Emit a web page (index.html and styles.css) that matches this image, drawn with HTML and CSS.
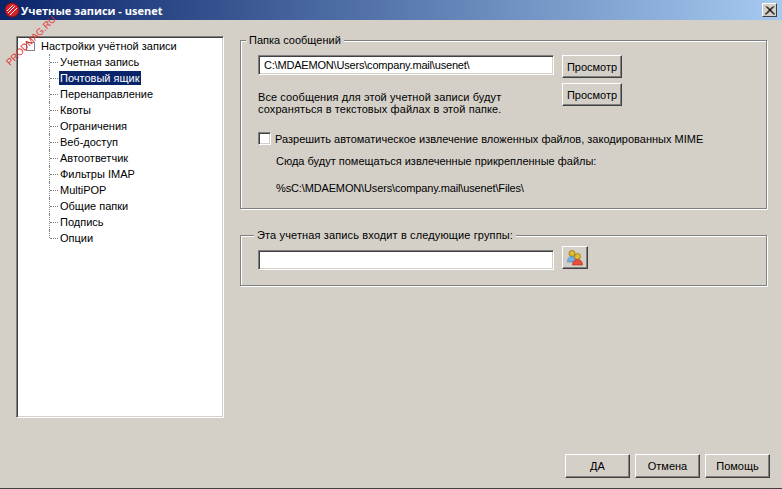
FILE: index.html
```html
<!DOCTYPE html>
<html lang="ru">
<head>
<meta charset="utf-8">
<title>Учетные записи - usenet</title>
<link rel="stylesheet" href="styles.css">
</head>
<body>
<div class="window">
  <header class="titlebar">
    <svg class="app-icon" width="16" height="16" viewBox="0 0 16 16">
      <circle cx="8" cy="8" r="7" fill="#d8202a" stroke="#7a1015" stroke-width="1"/>
      <path d="M3 9 9 3M4 11l7-7M6 13l7-7" stroke="#fff" stroke-width="1" fill="none"/>
    </svg>
    <span class="title-text">Учетные записи - usenet</span>
    <span class="close-btn">
      <svg width="10" height="9" viewBox="0 0 10 9"><path d="M1 0.5 9 8.5M2 0.5l8 8M9 0.5 1 8.5M8 0.5l-8 8" stroke="#000" stroke-width="1" fill="none"/></svg>
    </span>
  </header>
  <div class="content">
    <nav class="tree">
      <div class="tree-root"><span class="expander"></span><span>Настройки учётной записи</span></div>
      <ul class="tree-list">
        <li class="tree-item"><span class="tree-label">Учетная запись</span></li>
        <li class="tree-item"><span class="tree-label selected">Почтовый ящик</span></li>
        <li class="tree-item"><span class="tree-label">Перенаправление</span></li>
        <li class="tree-item"><span class="tree-label">Квоты</span></li>
        <li class="tree-item"><span class="tree-label">Ограничения</span></li>
        <li class="tree-item"><span class="tree-label">Веб-доступ</span></li>
        <li class="tree-item"><span class="tree-label">Автоответчик</span></li>
        <li class="tree-item"><span class="tree-label">Фильтры IMAP</span></li>
        <li class="tree-item"><span class="tree-label">MultiPOP</span></li>
        <li class="tree-item"><span class="tree-label">Общие папки</span></li>
        <li class="tree-item"><span class="tree-label">Подпись</span></li>
        <li class="tree-item"><span class="tree-label">Опции</span></li>
      </ul>
    </nav>
    <main class="panels">
      <fieldset class="group group-folder">
        <legend class="group-title">Папка сообщений</legend>
        <div class="row">
          <div class="field field-path">C:\MDAEMON\Users\company.mail\usenet\</div>
          <button class="btn btn-browse">Просмотр</button>
        </div>
        <div class="row row-note">
          <p class="note">Все сообщения для этой учетной записи будут<br>сохраняться в текстовых файлах в этой папке.</p>
          <button class="btn btn-browse">Просмотр</button>
        </div>
        <div class="check-row">
          <span class="checkbox"></span>
          <span>Разрешить автоматическое извлечение вложенных файлов, закодированных MIME</span>
        </div>
        <p class="indent indent-first">Сюда будут помещаться извлеченные прикрепленные файлы:</p>
        <p class="indent indent-second">%sC:\MDAEMON\Users\company.mail\usenet\Files\</p>
      </fieldset>
      <fieldset class="group group-members">
        <legend class="group-title">Эта учетная запись входит в следующие группы:</legend>
        <div class="row">
          <div class="field field-empty"></div>
          <button class="btn btn-icon" aria-label="Группы">
            <svg width="18" height="18" viewBox="0 0 18 18">
              <circle cx="6" cy="4.500" r="3" fill="#e0bc30" stroke="#8a6a10" stroke-width=".7"/>
              <path d="M1.500 13c0-4 2-5.500 4.500-5.500S9 9 9 13z" fill="#6fb0e8" stroke="#4a7fb0" stroke-width=".6"/>
              <circle cx="11.500" cy="7.500" r="3" fill="#e0bc30" stroke="#8a6a10" stroke-width=".7"/>
              <path d="M6.500 16c0-4 2.500-5.500 5-5.500s5 1.500 5 5.500z" fill="#e8503c" stroke="#a8281c" stroke-width=".6"/>
            </svg>
          </button>
        </div>
      </fieldset>
    </main>
  </div>
  <footer class="actions">
    <button class="btn btn-action">ДА</button>
    <button class="btn btn-action">Отмена</button>
    <button class="btn btn-action">Помощь</button>
  </footer>
  <span class="watermark">PRODMAG.RU</span>
</div>
</body>
</html>
```
FILE: styles.css
```css
* { box-sizing: border-box; }
html, body { margin: 0; padding: 0; }
body {
  width: 782px;
  height: 489px;
  overflow: hidden;
  background: #d4d0c8;
  font-family: "Liberation Sans", Arial, sans-serif;
  font-size: 11px;
  color: #000;
}
.window {
  position: relative;
  width: 782px;
  height: 489px;
  display: flex;
  flex-direction: column;
  border-bottom: 1px solid #404040;
}
.titlebar {
  height: 20px;
  flex: none;
  display: flex;
  align-items: center;
  padding: 0 5px 0 4px;
  background: linear-gradient(90deg, #0a246a 0%, #a6caf0 100%);
  color: #fff;
  font-family: "Open Sans", sans-serif;
  font-weight: 700;
  font-size: 11px;
}
.app-icon { flex: none; margin-right: 1px; }
.title-text { flex: 1; }
.close-btn {
  width: 15px;
  height: 14px;
  display: flex;
  align-items: center;
  justify-content: center;
  background: #d4d0c8;
  border: 1px solid;
  border-color: #fff #404040 #404040 #fff;
}
.content {
  flex: 1;
  display: flex;
  align-items: flex-start;
  padding: 16px 15px 0 16px;
}
.tree {
  width: 208px;
  height: 382px;
  flex: none;
  background: #fff;
  border: 1px solid;
  border-color: #808080 #fff #fff #808080;
  box-shadow: inset 1px 1px #404040, inset -1px -1px #d4d0c8;
  padding: 1px 0 0 8px;
}
.tree-root {
  height: 16px;
  display: flex;
  align-items: center;
}
.expander {
  width: 9px;
  height: 9px;
  margin: 1px 6px 0 1px;
  border: 1px solid #808080;
  background: #fff;
}
.tree-list {
  list-style: none;
  margin: 0;
  padding: 0 0 0 24px;
}
.tree-item {
  position: relative;
  height: 16px;
  display: flex;
  align-items: center;
  padding-left: 10px;
}
.tree-item::before {
  content: "";
  position: absolute;
  left: 0;
  top: 0;
  bottom: 0;
  border-left: 1px dotted #808080;
}
.tree-item:last-child::before { bottom: 8px; }
.tree-item::after {
  content: "";
  position: absolute;
  left: 1px;
  top: 8px;
  width: 8px;
  border-top: 1px dotted #808080;
}
.tree-label { padding: 0 2px 0 1px; line-height: 14px; }
.selected { background: #0a246a; color: #fff; }
.panels {
  width: 527px;
  margin-left: 16px;
  flex: none;
  display: flex;
  flex-direction: column;
}
.group {
  margin: 0;
  min-width: 0;
  width: 100%;
  border: 1px solid #808080;
  box-shadow: 1px 1px #fff, inset 1px 1px #fff;
  padding: 0 0 0 17px;
}
.group-title {
  padding: 1px 3px 0;
  line-height: 13px;
  background: #d4d0c8;
}
.group-folder { height: 176px; margin-top: -3px; }
.group-folder .group-title { margin-left: -12px; }
.group-members { height: 58px; margin-top: 19px; }
.group-members .group-title { margin-left: -4px; letter-spacing: .13px; }
.row {
  display: flex;
  align-items: flex-start;
  gap: 8px;
}
.group-folder > .row:first-of-type { margin-top: 8px; }
.group-members .row { margin-top: 4px; }
.field {
  width: 296px;
  height: 20px;
  padding: 0 0 0 5px;
  background: #fff;
  border: 1px solid;
  border-color: #808080 #fff #fff #808080;
  box-shadow: inset 1px 1px #404040, inset -1px -1px #d4d0c8;
  line-height: 18px;
}
.field-path { letter-spacing: -.19px; }
.field-empty { margin-top: 4px; }
.btn {
  padding: 0;
  background: #d4d0c8;
  border: 1px solid;
  border-color: #fff #404040 #404040 #fff;
  box-shadow: inset -1px -1px #808080;
  font: inherit;
  color: #000;
}
.btn-browse { width: 60px; height: 23px; }
.btn-icon {
  width: 26px;
  height: 23px;
  display: flex;
  align-items: center;
  justify-content: center;
}
.row-note { margin-top: 5px; }
.note {
  width: 296px;
  margin: 8px 0 0;
  line-height: 12px;
  letter-spacing: .09px;
}
.check-row {
  display: flex;
  align-items: center;
  gap: 4px;
  margin-top: 17px;
  height: 13px;
}
.checkbox {
  width: 13px;
  height: 13px;
  background: #fff;
  border: 1px solid;
  border-color: #808080 #fff #fff #808080;
  box-shadow: inset 1px 1px #404040, inset -1px -1px #d4d0c8;
}
.indent { margin: 0 0 0 18px; line-height: 13px; }
.indent-first { margin-top: 10px; }
.indent-second { margin-top: 14px; letter-spacing: -.14px; }
.actions {
  display: flex;
  justify-content: flex-end;
  gap: 5px;
  padding: 0 12px 10px 0;
}
.btn-action { width: 65px; height: 24px; }
.watermark {
  position: absolute;
  left: -2px;
  top: 35px;
  transform: rotate(-45deg);
  color: #e03030;
  font-size: 9.500px;
  white-space: nowrap;
}
```
